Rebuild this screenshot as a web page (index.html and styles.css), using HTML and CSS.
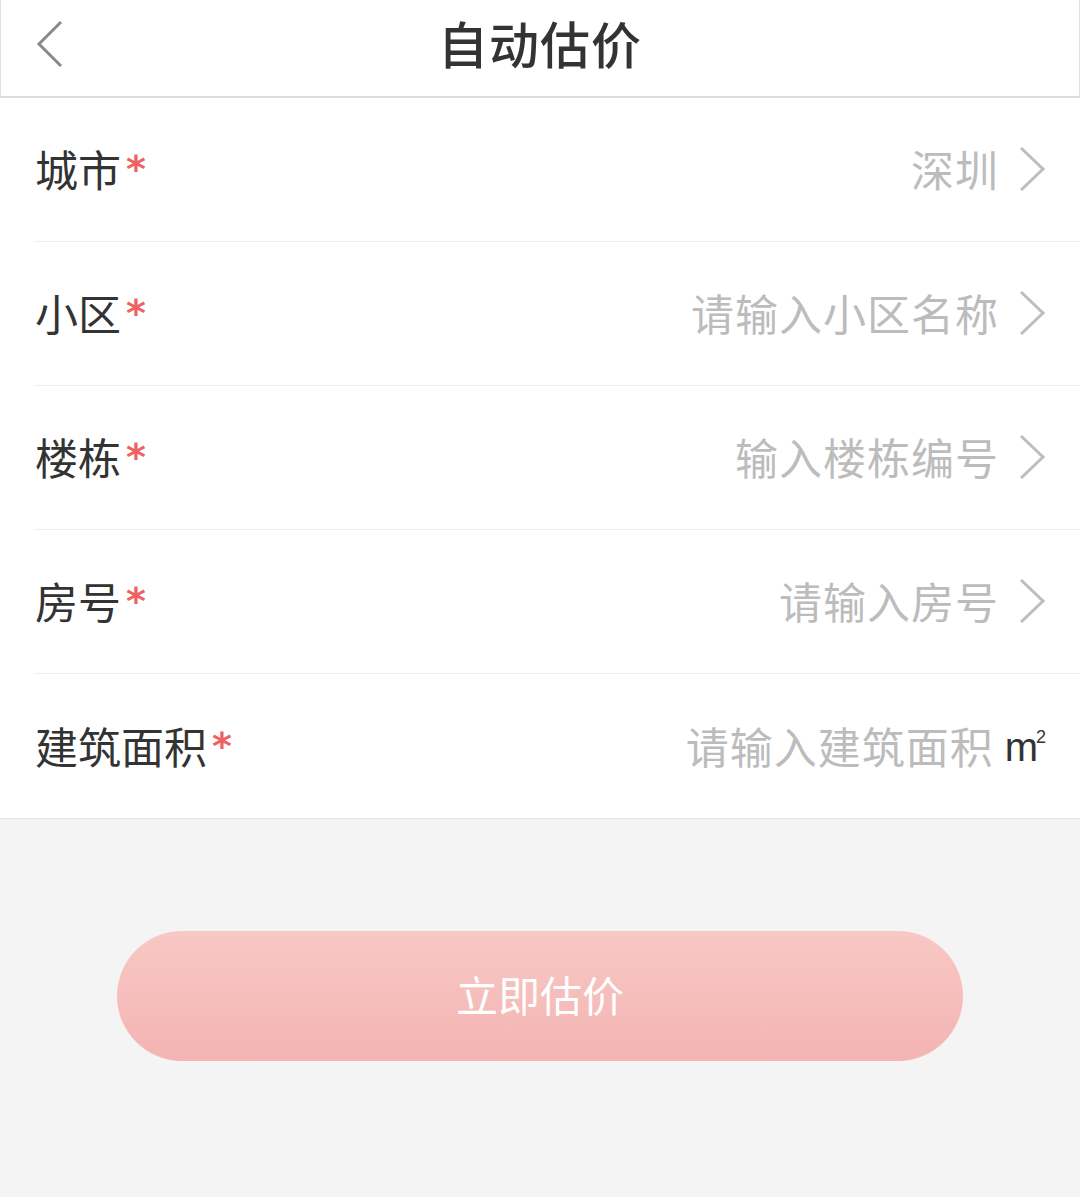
FILE: index.html
```html
<!DOCTYPE html>
<html lang="zh">
<head>
<meta charset="utf-8">
<title>自动估价</title>
<link rel="stylesheet" href="styles.css">
</head>
<body>
<header class="topbar">
  <svg class="back" width="30" height="50" viewBox="0 0 30 50"><polyline points="26,3 4,25 26,47" fill="none" stroke="#8a8a8a" stroke-width="3"/></svg>
  <h1 class="title">自动估价</h1>
</header>
<main class="form">
  <div class="row">
    <div class="label">城市<span class="req">*</span></div>
    <div class="value">深圳<svg class="chev" width="28" height="46" viewBox="0 0 28 46"><polyline points="3,2 25,23 3,44" fill="none" stroke="#bdbdbd" stroke-width="3"/></svg></div>
  </div>
  <div class="row">
    <div class="label">小区<span class="req">*</span></div>
    <div class="value">请输入小区名称<svg class="chev" width="28" height="46" viewBox="0 0 28 46"><polyline points="3,2 25,23 3,44" fill="none" stroke="#bdbdbd" stroke-width="3"/></svg></div>
  </div>
  <div class="row">
    <div class="label">楼栋<span class="req">*</span></div>
    <div class="value">输入楼栋编号<svg class="chev" width="28" height="46" viewBox="0 0 28 46"><polyline points="3,2 25,23 3,44" fill="none" stroke="#bdbdbd" stroke-width="3"/></svg></div>
  </div>
  <div class="row">
    <div class="label">房号<span class="req">*</span></div>
    <div class="value">请输入房号<svg class="chev" width="28" height="46" viewBox="0 0 28 46"><polyline points="3,2 25,23 3,44" fill="none" stroke="#bdbdbd" stroke-width="3"/></svg></div>
  </div>
  <div class="row last">
    <div class="label">建筑面积<span class="req">*</span></div>
    <div class="value">请输入建筑面积<span class="unit">m<sup>2</sup></span></div>
  </div>
</main>
<div class="actions">
  <button class="submit">立即估价</button>
</div>
</body>
</html>
```

FILE: styles.css
```css
html, body {
  margin: 0;
  padding: 0;
}
body {
  background: #f4f4f4;
  font-family: "Noto Sans CJK SC", "Noto Sans", sans-serif;
  color: #333;
  height: 1197px;
}
.topbar {
  background: #fff;
  border: 1px solid #e2e2e2;
  border-top: none;
  border-bottom: 2px solid #dcdcdc;
  box-sizing: border-box;
  height: 98px;
  display: flex;
  align-items: center;
  justify-content: center;
  position: relative;
}
.back {
  position: absolute;
  left: 34px;
  top: 19px;
}
.title {
  margin: 0;
  font-size: 50px;
  font-weight: 500;
  color: #333;
  letter-spacing: 1px;
  line-height: 1;
  padding-bottom: 12px;
}
.form {
  background: #fff;
  border-bottom: 1px solid #e6e6e6;
}
.row {
  margin-left: 35px;
  height: 144px;
  box-sizing: border-box;
  border-bottom: 1px solid #ececec;
  display: flex;
  align-items: center;
  justify-content: space-between;
  padding-right: 34px;
}
.row.last {
  border-bottom: none;
}
.label {
  font-size: 43px;
  color: #333;
  line-height: 1;
  display: flex;
  align-items: flex-start;
  padding-bottom: 2px;
}
.req {
  color: #ee6262;
  font-size: 38px;
  font-weight: bold;
  margin-left: 5px;
  position: relative;
  top: 3px;
  font-family: "DejaVu Sans", sans-serif;
  line-height: 1;
}
.value {
  font-size: 43px;
  letter-spacing: 1px;
  color: #bcbcbc;
  line-height: 1;
  display: flex;
  align-items: center;
  padding-bottom: 2px;
}
.chev {
  margin-left: 19px;
}
.unit {
  color: #333;
  font-family: "Liberation Sans", sans-serif;
  font-size: 40px;
  letter-spacing: 0;
  margin-left: 11px;
  position: relative;
  top: 2px;
}
.unit sup {
  font-size: 18px;
  position: relative;
  top: -4px;
  margin-left: -2px;
}
.actions {
  display: flex;
  justify-content: center;
  padding-top: 112px;
}
.submit {
  width: 846px;
  height: 130px;
  border: none;
  border-radius: 65px;
  background: linear-gradient(#f8c8c5, #f3b4b2);
  color: #fff;
  font-family: "Noto Sans CJK SC", sans-serif;
  font-size: 42px;
  padding: 0 0 6px;
}
```
